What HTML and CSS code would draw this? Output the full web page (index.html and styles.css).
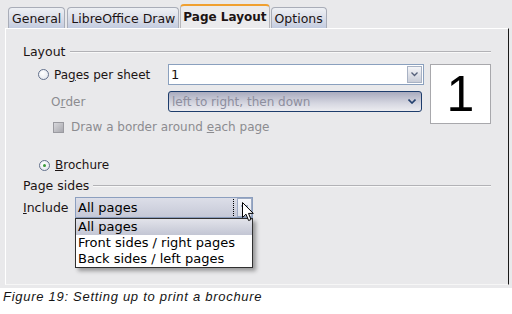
FILE: index.html
```html
<!DOCTYPE html>
<html lang="en">
<head>
    <meta charset="UTF-8">
    <title>Page Layout</title>
    <link rel="stylesheet" href="styles.css">
</head>
<body>
    <div class="dialog">
        <div class="tabs">
            <div class="tab">General</div>
            <div class="tab">LibreOffice Draw</div>
            <div class="tab active">Page Layout</div>
            <div class="tab">Options</div>
        </div>
        <div class="panel">
            <div class="heading"><span>Layout</span></div>
            <div class="layout-body">
                <div class="options">
                    <div class="row">
                        <label class="label"><span class="radio"></span>Pa<u>g</u>es per sheet</label>
                        <div class="combo">
                            <span class="value">1</span>
                            <span class="drop-btn"><svg width="7" height="5" viewBox="0 0 7 5"><polyline points="0.5,0.5 3.5,3.5 6.5,0.5" fill="none" stroke="#55607a" stroke-width="1.3"/></svg></span>
                        </div>
                    </div>
                    <div class="row">
                        <label class="label disabled indent">O<u>r</u>der</label>
                        <div class="listbox disabled-box">
                            <span class="value">left to right, then down</span>
                            <svg width="8" height="5" viewBox="0 0 8 5"><polyline points="0.5,0.5 4,4 7.5,0.5" fill="none" stroke="#23406e" stroke-width="1.6"/></svg>
                        </div>
                    </div>
                    <div class="row check-row">
                        <span class="checkbox"></span>
                        <span class="disabled">Draw a border around <u>e</u>ach page</span>
                    </div>
                </div>
                <div class="preview">1</div>
            </div>
            <div class="row brochure">
                <label class="label"><span class="radio checked"></span><u>B</u>rochure</label>
            </div>
            <div class="heading sides"><span>Page sides</span></div>
            <div class="include-row">
                <label class="include-label"><u>I</u>nclude</label>
                <div class="include-box">
                    <span class="value">All pages</span>
                    <span class="focus-line"></span>
                    <span class="drop-btn light"><svg width="7" height="5" viewBox="0 0 7 5"><polyline points="0.5,0.5 3.5,3.5 6.5,0.5" fill="none" stroke="#4e6a96" stroke-width="1.3"/></svg></span>
                    <ul class="popup">
                        <li class="selected">All pages</li>
                        <li>Front sides / right pages</li>
                        <li>Back sides / left pages</li>
                    </ul>
                    <svg class="cursor" width="13" height="20" viewBox="0 0 13 20">
                        <path d="M0.5,0.5 L0.5,15.5 L4,12.2 L6.6,18.5 L9,17.5 L6.5,11.4 L11.3,11.4 Z" fill="#fff" stroke="#000" stroke-width="1"/>
                    </svg>
                </div>
            </div>
        </div>
    </div>
    <p class="caption">Figure 19: Setting up to print a brochure</p>
</body>
</html>
```

FILE: styles.css
```css
body {
    margin: 0;
    background: #ffffff;
    font-family: 'DejaVu Sans', sans-serif;
    font-size: 12px;
    color: #1c1414;
}
.dialog {
    background: #e9e9eb;
    padding: 4px 3px 3px 5px;
}
.tabs {
    display: flex;
    align-items: flex-end;
    gap: 2px;
    padding-left: 3px;
    height: 24px;
}
.tab {
    height: 20px;
    line-height: 21px;
    padding: 0 3px;
    border: 1px solid #a9adb8;
    border-bottom: none;
    border-radius: 4px 4px 0 0;
    background: linear-gradient(#eef0f4, #d9dde8 55%, #c3cce0);
    font-size: 12.5px;
}
.tab.active {
    height: 23px;
    line-height: 22px;
    padding: 0 2px;
    font-size: 12px;
    font-weight: bold;
    background: #ebebed;
    border-color: #b8b8bc;
    border-top: 2px solid #f0a030;
    margin: 0 -1px -1px;
    position: relative;
}
.panel {
    position: relative;
    height: 240px;
    padding: 15px 17px 0 17px;
    border-top: 1px solid #ffffff;
    border-left: 1px solid #ffffff;
    border-right: 1px solid #1a1a1a;
    border-bottom: 1px solid #f6f6f6;
}
.heading {
    display: flex;
    align-items: center;
    line-height: 15px;
    font-size: 12.5px;
}
.heading::after {
    content: "";
    flex: 1;
    height: 1px;
    margin-left: 4px;
    background: #b2b2b6;
    border-bottom: 1px solid #f8f8f8;
}
.layout-body {
    display: flex;
    margin-top: 5px;
}
.options {
    width: 386px;
    padding-left: 15px;
}
.row {
    display: flex;
    align-items: center;
    height: 21px;
}
.row + .row {
    margin-top: 6px;
}
.label {
    display: flex;
    align-items: center;
    width: 130px;
    flex-shrink: 0;
}
.indent {
    padding-left: 13px;
    box-sizing: border-box;
}
.disabled {
    color: #8c8c90;
}
.radio {
    width: 9px;
    height: 9px;
    border: 1px solid #62708c;
    border-radius: 50%;
    margin-right: 5px;
    background: radial-gradient(circle at 40% 35%, #ffffff, #dfe3ea);
    position: relative;
}
.radio.checked::after {
    content: "";
    position: absolute;
    left: 3px;
    top: 3px;
    width: 3px;
    height: 3px;
    border-radius: 50%;
    background: #3a9a3a;
}
.combo {
    display: flex;
    align-items: center;
    justify-content: space-between;
    width: 254px;
    height: 19px;
    background: #ffffff;
    border: 1px solid #8aa0be;
}
.combo .value {
    padding-left: 2px;
    font-size: 13px;
}
.drop-btn {
    display: flex;
    align-items: center;
    justify-content: center;
    width: 15px;
    height: 17px;
    margin-right: 1px;
    background: linear-gradient(#f4f5f8, #c9cdd8);
    border: 1px solid #a8b2c4;
    box-sizing: border-box;
}
.listbox {
    display: flex;
    align-items: center;
    justify-content: space-between;
    height: 19px;
    padding-right: 5px;
    border: 1px solid #1e3d6c;
    border-radius: 3px;
}
.disabled-box {
    background: linear-gradient(#a9abbe, #d6d7e1 60%, #ececf0);
    color: #8d8e9e;
    width: 247px;
}
.listbox .value {
    padding-left: 3px;
}
.check-row {
    height: 14px;
    margin-top: 8px !important;
    padding-left: 15px;
}
.checkbox {
    width: 9px;
    height: 9px;
    border: 1px solid #9a9aa0;
    background: linear-gradient(135deg, #d8d8dc, #a8a8ae);
    margin-right: 7px;
}
.preview {
    width: 59px;
    height: 58px;
    margin-left: 6px;
    background: #ffffff;
    border: 1px solid #a8a8ac;
    font-family: 'Liberation Sans', sans-serif;
    font-size: 50px;
    line-height: 58px;
    text-align: center;
    color: #000000;
}
.brochure {
    height: 14px;
    margin-top: 24px;
    padding-left: 16px;
}
.sides {
    margin-top: 6px;
}
.include-row {
    display: flex;
    align-items: center;
    margin-top: 4px;
    height: 21px;
}
.include-label {
    width: 52px;
    font-size: 12.5px;
}
.include-box {
    position: relative;
    display: flex;
    align-items: center;
    width: 176px;
    height: 19px;
    border: 1px solid #8c9fbf;
    background: linear-gradient(#dcdee8, #c6c9d7);
}
.include-box .value {
    flex: 1;
    padding-left: 2px;
    font-size: 13px;
    color: #000000;
}
.focus-line {
    width: 0;
    height: 17px;
    border-left: 1px dotted #000000;
    margin-right: 3px;
}
.drop-btn.light {
    background: linear-gradient(#f6f7fa, #dfe2ea);
    border-color: #9eabc4;
    margin-right: 0;
    height: 19px;
}
.popup {
    position: absolute;
    left: -1px;
    top: 20px;
    width: 176px;
    margin: 0;
    padding: 0;
    list-style: none;
    background: #ffffff;
    border: 1px solid #303030;
    box-shadow: 3px 3px 4px rgba(0, 0, 0, 0.35);
    font-size: 13px;
    color: #000000;
}
.popup li {
    height: 16px;
    line-height: 16px;
    padding-left: 2px;
}
.popup li.selected {
    background: linear-gradient(#e2e3ea, #c3c6d4);
}
.cursor {
    position: absolute;
    left: 166px;
    top: 4px;
}
.caption {
    margin: 0;
    padding: 0 0 0 3px;
    font-family: 'Liberation Sans', sans-serif;
    font-style: italic;
    font-size: 13px;
    letter-spacing: 0.72px;
    line-height: 18px;
    color: #141414;
}
```
